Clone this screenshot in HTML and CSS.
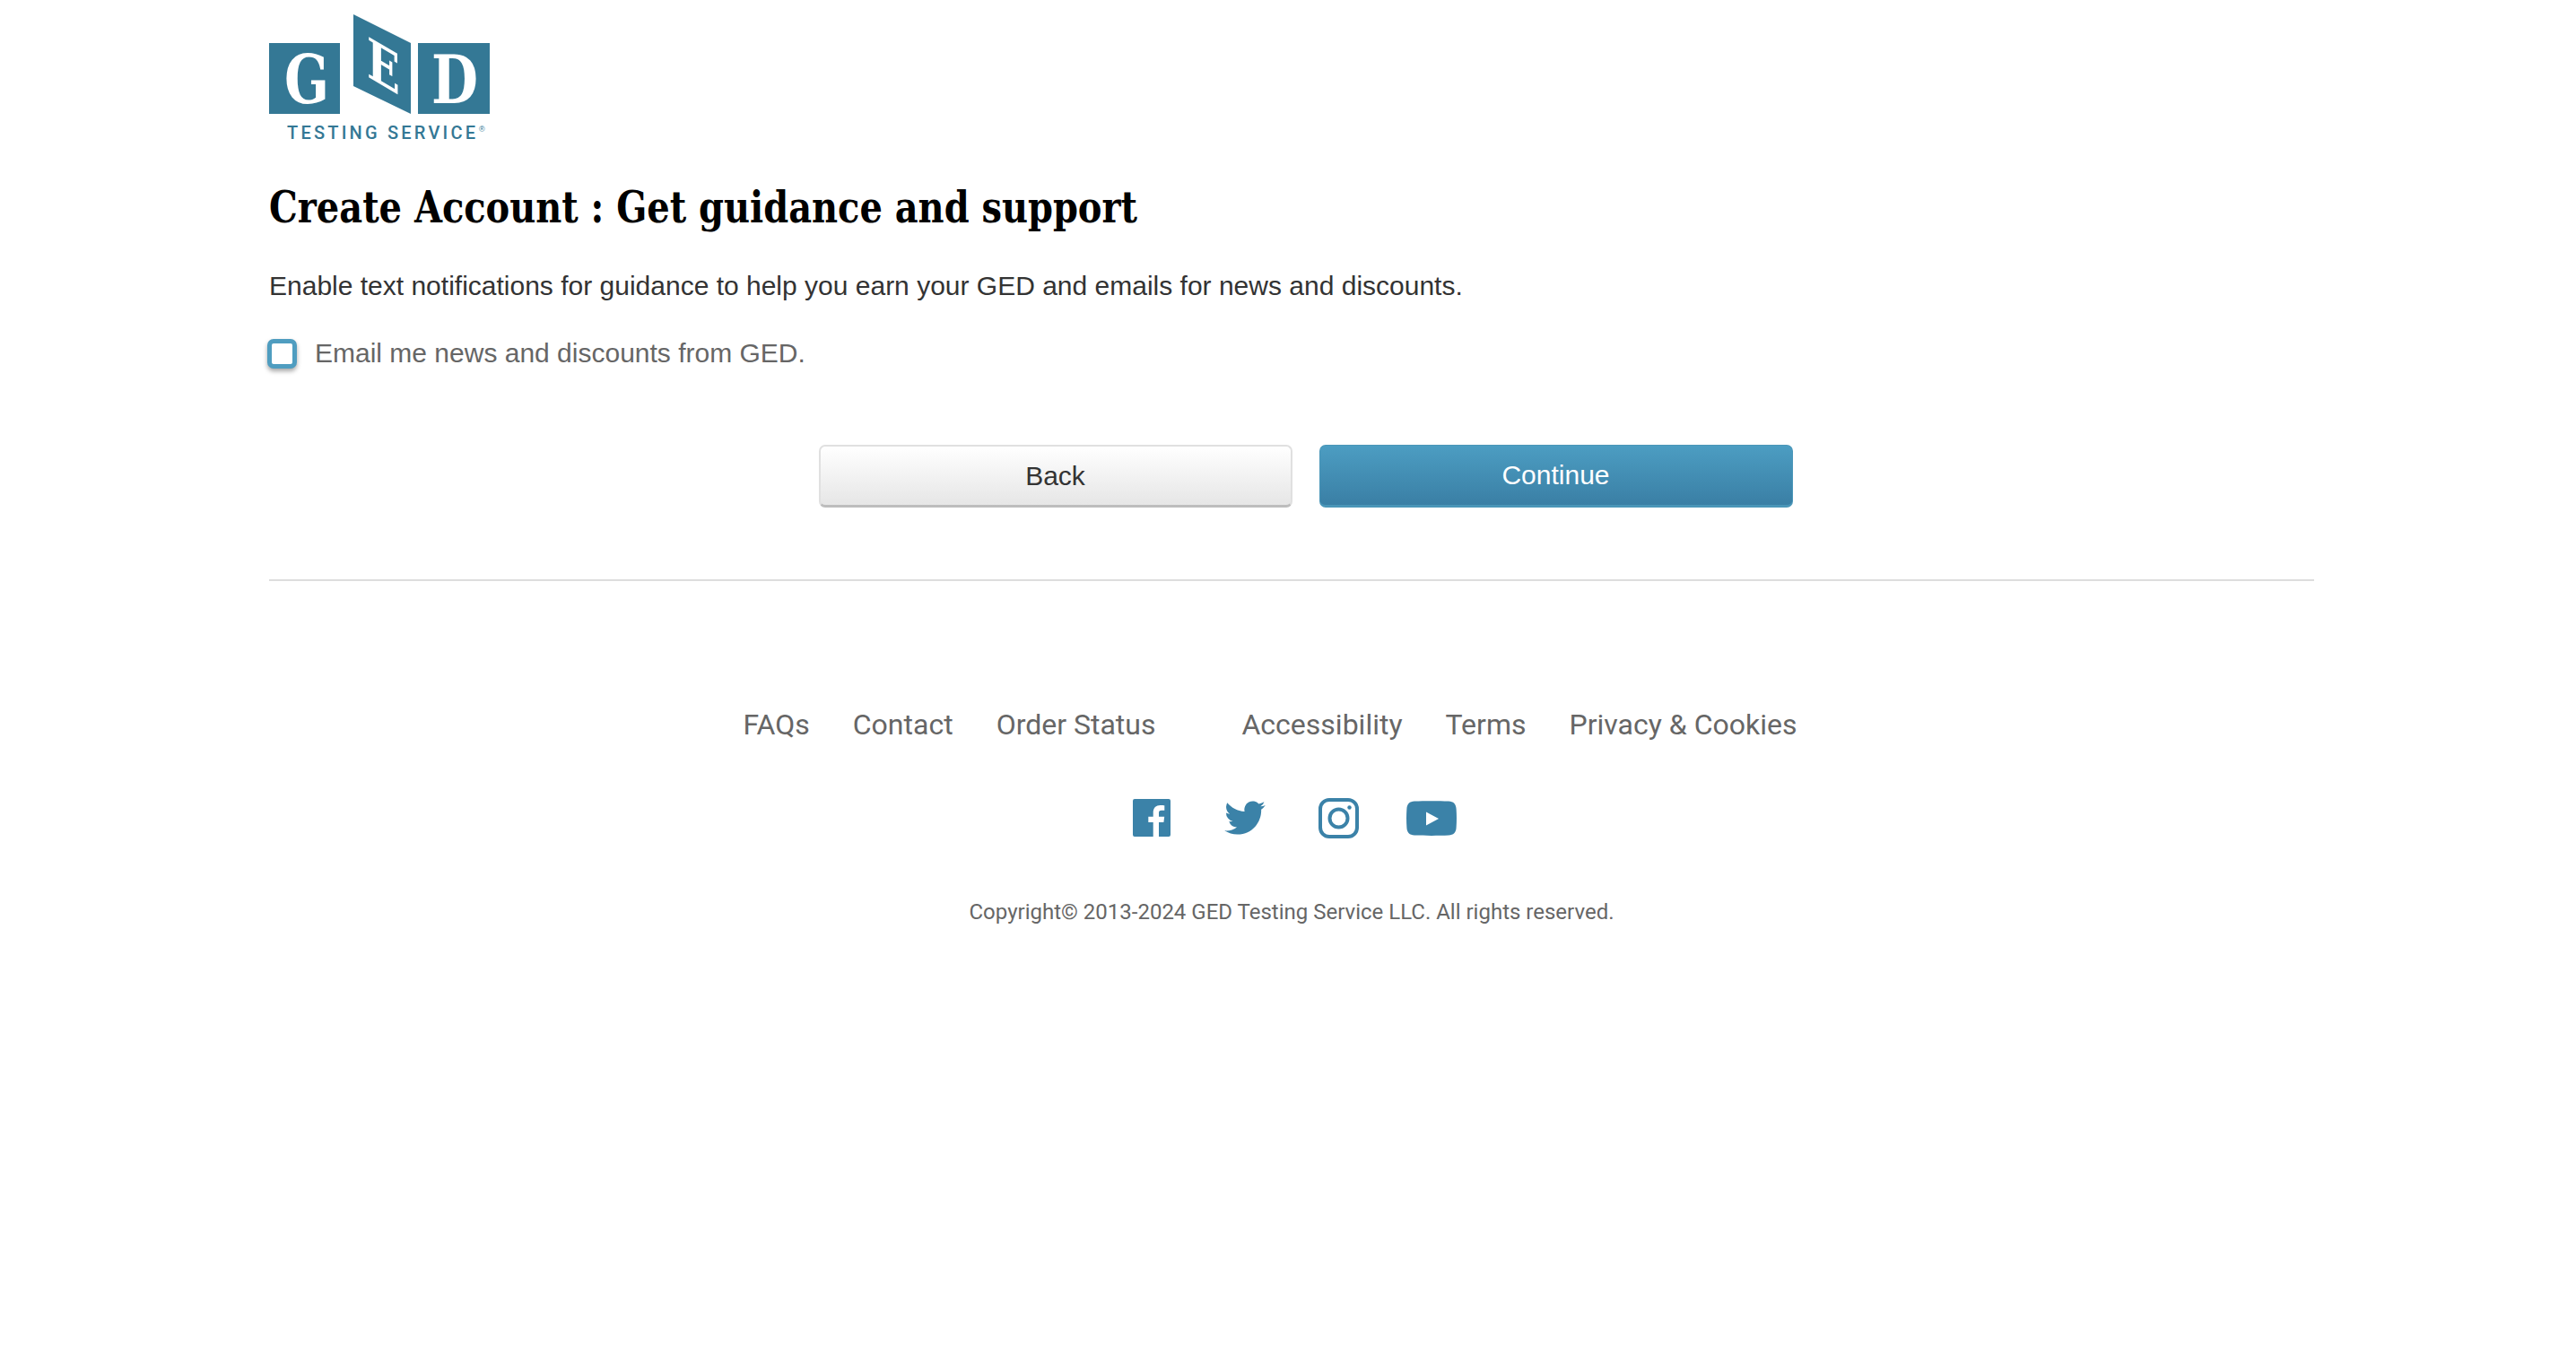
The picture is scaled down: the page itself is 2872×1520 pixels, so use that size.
FILE: index.html
```html
<!DOCTYPE html>
<html lang="en">
<head>
    <meta charset="UTF-8">
    <meta name="viewport" content="width=device-width, initial-scale=1.0">
    <title>Create Account : Get guidance and support</title>
    <link rel="stylesheet" href="styles.css">
</head>
<body>
    <main class="page">
        <!-- Logo -->
        <svg class="logo" viewBox="0 0 250 160" aria-label="GED Testing Service">
            <rect class="logo-panel" x="0" y="48" width="79" height="79"/>
            <polygon class="logo-panel" points="94,16 158,48 158,127 94,96"/>
            <rect class="logo-panel" x="166" y="48" width="80" height="79"/>
            <text class="logo-letter" transform="translate(17 115) scale(0.78 1)">G</text>
            <text class="logo-letter logo-letter-e" transform="matrix(0.78 0.46 0 1 109 85)">E</text>
            <text class="logo-letter" transform="translate(181 115) scale(0.8 1)">D</text>
            <text class="logo-name" x="20" y="155" textLength="210">TESTING SERVICE</text>
            <text class="logo-reg" x="234" y="147">®</text>
        </svg>

        <h1>Create Account : Get guidance and support</h1>
        <p class="intro">Enable text notifications for guidance to help you earn your GED and emails for news and discounts.</p>

        <label class="check-row">
            <input type="checkbox">
            <span>Email me news and discounts from GED.</span>
        </label>

        <div class="actions">
            <button class="btn btn-back" type="button">Back</button>
            <button class="btn btn-continue" type="button">Continue</button>
        </div>

        <hr>

        <footer>
            <nav class="links">
                <div class="link-group">
                    <a href="#">FAQs</a>
                    <a href="#">Contact</a>
                    <a href="#">Order Status</a>
                </div>
                <div class="link-group">
                    <a href="#">Accessibility</a>
                    <a href="#">Terms</a>
                    <a href="#">Privacy &amp; Cookies</a>
                </div>
            </nav>

            <div class="social">
                <a href="#" aria-label="Facebook">
                    <svg width="42" height="42" viewBox="0 0 42 42">
                        <path class="icon-fill" d="M2 0h38a2 2 0 0 1 2 2v38a2 2 0 0 1-2 2H29V26h5.4l.8-6.2H29v-4c0-1.8.5-3 3-3h3.300V7.200c-.6-.1-2.500-.2-4.700-.2-4.700 0-7.900 2.900-7.900 8.100v4.700h-5.400V26h5.400v16H2a2 2 0 0 1-2-2V2a2 2 0 0 1 2-2z"/>
                    </svg>
                </a>
                <a href="#" aria-label="Twitter">
                    <svg width="46" height="38" viewBox="0 0 24 20">
                        <path class="icon-fill" d="M23.950 2.570a10 10 0 0 1-2.820.78 4.960 4.960 0 0 0 2.160-2.730c-.95.560-2 .96-3.130 1.190a4.920 4.920 0 0 0-8.380 4.480C7.690 6.100 4.070 4.130 1.640 1.160a4.820 4.820 0 0 0-.67 2.480c0 1.710.87 3.210 2.190 4.100a4.900 4.900 0 0 1-2.230-.62v.06a4.920 4.920 0 0 0 3.950 4.830 5 5 0 0 1-2.210.09 4.940 4.940 0 0 0 4.600 3.410 9.870 9.870 0 0 1-6.100 2.110c-.39 0-.78-.03-1.170-.07a14 14 0 0 0 7.560 2.210c9.050 0 14-7.500 14-13.990 0-.21 0-.42-.02-.63A9.940 9.940 0 0 0 24 2.590z"/>
                    </svg>
                </a>
                <a href="#" aria-label="Instagram">
                    <svg width="45" height="45" viewBox="0 0 45 45">
                        <rect class="icon-line" x="2" y="2" width="41" height="41" rx="10"/>
                        <circle class="icon-line" cx="22.500" cy="22.500" r="10"/>
                        <circle class="icon-fill" cx="34.500" cy="10.500" r="2.200"/>
                    </svg>
                </a>
                <a href="#" aria-label="YouTube">
                    <svg width="56" height="39" viewBox="0 0 56 39">
                        <path class="icon-fill" d="M9 0.500C20 0 36 0 47 0.500 52.500 0.800 55.300 3.500 55.600 9 56.100 16 56.100 23 55.600 30 55.300 35.500 52.500 38.200 47 38.500 36 39 20 39 9 38.500 3.500 38.200 0.700 35.500 0.400 30-0.100 23-0.100 16 0.400 9 0.700 3.500 3.500 0.800 9 0.500zM22 12.500V27.500L36 20z" fill-rule="evenodd"/>
                    </svg>
                </a>
            </div>

            <p class="copyright">Copyright© 2013-2024 GED Testing Service LLC. All rights reserved.</p>
        </footer>
    </main>
</body>
</html>
```

FILE: styles.css
```css
body {
    font-family: "Liberation Sans", Arial, sans-serif;
    margin: 0;
    padding: 0;
    background-color: #fff;
    color: #333;
}
.page {
    width: 2280px;
    margin-left: 300px;
}
.logo {
    display: block;
    width: 250px;
    height: 160px;
}
.logo-panel {
    fill: #347895;
}
.logo-letter {
    font-family: "DejaVu Serif", serif;
    font-weight: bold;
    font-size: 75px;
    fill: #fff;
}
.logo-letter-e {
    font-size: 62px;
}
.logo-name {
    font-family: "Roboto", sans-serif;
    font-weight: 500;
    font-size: 20px;
    fill: #347895;
}
.logo-reg {
    font-family: "Liberation Sans", sans-serif;
    font-size: 9px;
    fill: #347895;
}
h1 {
    font-family: "DejaVu Serif Condensed", "DejaVu Serif", serif;
    font-weight: bold;
    font-size: 49px;
    line-height: 60px;
    color: #000;
    margin: 41px 0 0;
    transform: scaleX(0.906);
    transform-origin: left;
}
.intro {
    font-size: 30px;
    line-height: 40px;
    margin: 38px 0 0;
}
.check-row {
    display: flex;
    align-items: center;
    gap: 20px;
    margin-top: 35px;
    font-size: 30px;
    line-height: 40px;
    color: #666;
}
.check-row input {
    appearance: none;
    width: 33px;
    height: 33px;
    margin: 0 0 0 -2px;
    background: #fff;
    border: 5px solid #4f9dc0;
    border-radius: 7px;
    box-shadow: 0 3px 5px rgba(0, 0, 0, 0.35);
}
.actions {
    display: flex;
    justify-content: center;
    gap: 30px;
    padding-left: 31px;
    margin-top: 82px;
}
.btn {
    width: 528px;
    height: 70px;
    font-family: inherit;
    font-size: 30px;
    border-radius: 7px;
}
.btn-back {
    color: #333;
    background: linear-gradient(#fff, #e6e6e6);
    border: 2px solid #e0e0e0;
    border-bottom: 3px solid #bdbdbd;
}
.btn-continue {
    color: #fff;
    background: linear-gradient(#4c9dc2, #3a7fa5);
    border: 1px solid #4a96b8;
    border-bottom: 3px solid #4a96b8;
}
hr {
    border: 0;
    height: 2px;
    background-color: #ddd;
    margin: 80px 0 0;
}
footer {
    text-align: center;
}
.links {
    display: flex;
    justify-content: center;
    gap: 96px;
    margin-top: 136px;
    font-family: "Roboto", sans-serif;
    font-size: 32px;
    line-height: 48px;
}
.link-group {
    display: flex;
    gap: 48px;
}
.link-group:last-child {
    margin-right: 48px;
}
.links a {
    color: #666;
    text-decoration: none;
}
.social {
    display: flex;
    justify-content: center;
    align-items: center;
    margin-top: 57px;
    height: 46px;
}
.social a {
    display: flex;
    justify-content: center;
    width: 104px;
}
.icon-fill {
    fill: #3b82a8;
}
.icon-line {
    fill: none;
    stroke: #3b82a8;
    stroke-width: 4px;
}
.copyright {
    font-family: "Roboto", sans-serif;
    font-size: 24px;
    line-height: 36px;
    color: #666;
    margin: 64px 0 0;
}
```
